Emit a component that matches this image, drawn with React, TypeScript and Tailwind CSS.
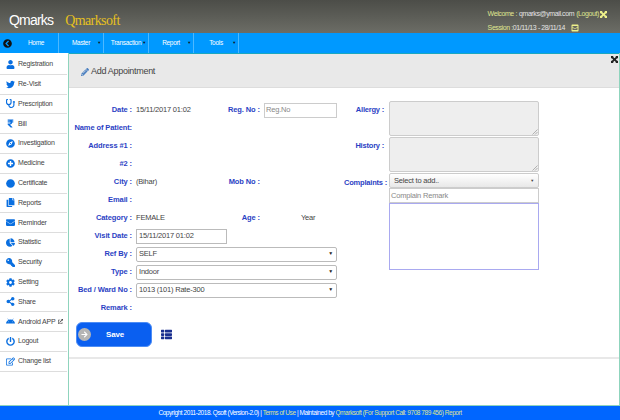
import React from "react";
import {
  FaUser, FaTwitter, FaStethoscope, FaRupeeSign, FaCompass, FaPlusCircle, FaCircle, FaCopy,
  FaEnvelope, FaChartPie, FaKey, FaCog, FaShareAlt, FaAndroid, FaPowerOff, FaRegEdit,
  FaChevronCircleLeft, FaPencilAlt, FaThList, FaArrowRight, FaEnvelopeSquare, FaExternalLinkAlt,
} from "react-icons/fa";

const sideItems = [
  { label: "Registration", icon: FaUser },
  { label: "Re-Visit", icon: FaTwitter },
  { label: "Prescription", icon: FaStethoscope },
  { label: "Bill", icon: FaRupeeSign },
  { label: "Investigation", icon: FaCompass },
  { label: "Medicine", icon: FaPlusCircle },
  { label: "Certificate", icon: FaCircle },
  { label: "Reports", icon: FaCopy },
  { label: "Reminder", icon: FaEnvelope },
  { label: "Statistic", icon: FaChartPie },
  { label: "Security", icon: FaKey },
  { label: "Setting", icon: FaCog },
  { label: "Share", icon: FaShareAlt },
  { label: "Android APP", icon: FaAndroid },
  { label: "Logout", icon: FaPowerOff },
  { label: "Change list", icon: FaRegEdit },
];

const navItems = [
  { label: "Home", caret: false },
  { label: "Master", caret: true },
  { label: "Transaction", caret: true },
  { label: "Report", caret: true },
  { label: "Tools", caret: true },
];

function Arrows({ className }: { className: string }) {
  return (
    <svg viewBox="0 0 12 12" className={className} fill="currentColor">
      <path d="M0 0h4.500L3.400 1.100 6 3.700l2.600-2.600L7.500 0H12v4.500l-1.100-1.100L8.300 6l2.600 2.600 1.100-1.100V12H7.500l1.100-1.100L6 8.300l-2.600 2.600L4.500 12H0V7.500l1.100 1.100L3.700 6 1.100 3.400 0 4.500z" />
    </svg>
  );
}

function Grip() {
  return (
    <svg viewBox="0 0 6 6" className="absolute bottom-0 right-0 h-[6px] w-[6px] text-[#888]" stroke="currentColor" strokeWidth="0.6">
      <path d="M0.500 5.500L5.500 0.500M3 5.500L5.500 3" />
    </svg>
  );
}

function Row({ label, children }: { label: string; children?: React.ReactNode }) {
  return (
    <div className="flex h-[18px] items-center">
      <div className="w-[63px] shrink-0 whitespace-nowrap text-right text-[7.500px] font-bold tracking-[-0.1px] text-[#2b3fc4]">{label}</div>
      <div className="ml-[4px] flex flex-1 items-center text-[#444]">{children}</div>
    </div>
  );
}

function SelectBox({ value }: { value: string }) {
  return (
    <div className="flex h-[15px] w-[201px] items-center justify-between rounded-[2px] border border-[#bbb] bg-white pl-[2px] pr-[3px] text-[#444]">
      <span>{value}</span>
      <span className="text-[5px] text-[#222]">▼</span>
    </div>
  );
}

function MidLabel({ label, children }: { label: string; children?: React.ReactNode }) {
  return (
    <div className="flex items-center">
      <span className="w-[50px] whitespace-nowrap text-right text-[7.500px] font-bold tracking-[-0.1px] text-[#2b3fc4]">{label} :</span>
      {children}
    </div>
  );
}

export default function App() {
  return (
    <div className="flex h-[420px] w-[620px] flex-col overflow-hidden bg-white font-['Liberation_Sans',sans-serif] text-[7.500px] tracking-[-0.2px]">
      <header className="flex h-[33px] items-start justify-between bg-gradient-to-b from-[#4c4d48] to-[#6c6d66] tracking-normal">
        <div className="flex items-baseline pl-[9px] pt-[10px]">
          <span className="text-[14px] leading-[20px] tracking-[-0.8px] text-white">Qmarks</span>
          <span className="ml-[12px] font-['Liberation_Serif',serif] text-[14px] leading-[20px] tracking-[-0.6px] text-[#e6c01e]">Qmarksoft</span>
        </div>
        <div className="pr-[13px] pt-[7px] text-[7px] leading-[14px] tracking-[-0.4px] text-[#dfe58f]">
          <div className="flex items-center">
            Welcome : <span className="ml-[2px] text-[#e4e4e4]">qmarks@ymail.com</span>
            <span className="ml-[2px]">(Logout)</span>
            <Arrows className="ml-[1px] h-[7px] w-[7px] text-[#eef08a]" />
          </div>
          <div className="flex items-center">
            Session :<span className="text-[#e4e4e4]">01/11/13 - 28/11/14</span>
            <FaEnvelopeSquare className="ml-[6px] text-[8px] text-[#eef08a]" />
          </div>
        </div>
      </header>

      <nav className="flex h-[20px] items-stretch bg-[#0099ff] text-white">
        <div className="flex w-[14px] items-center justify-center">
          <FaChevronCircleLeft className="text-[9px] text-[#111]" />
        </div>
        {navItems.map((item) => (
          <div key={item.label} className="relative flex w-[45px] items-center justify-center border-r border-[#4db8ff]">
            <span className="text-[6.500px] tracking-[-0.3px]">{item.label}</span>
            {item.caret && <span className="absolute right-[2px] top-[7px] text-[4px] text-[#111]">▼</span>}
          </div>
        ))}
      </nav>

      <div className="flex min-h-0 flex-1">
        <aside className="w-[69px] shrink-0 border-r border-[#8fd4bd] bg-white pt-[2px]">
          {sideItems.map((item) => (
            <div key={item.label} className="mr-[1px] flex h-[19.800px] items-center border-b border-[#ddd] pl-[6px]">
              <item.icon className={`w-[9px] shrink-0 text-[9px] text-[#0a6fe0] ${item.label === "Security" ? "-scale-x-100" : ""}`} />
              <span className="ml-[3px] flex items-center whitespace-nowrap text-[7px] text-[#444]">
                {item.label}
                {item.label === "Android APP" && <FaExternalLinkAlt className="ml-[2px] text-[5px]" />}
              </span>
            </div>
          ))}
        </aside>

        <main className="min-w-0 flex-1 border-r border-[#8fd4bd]">
          <div className="relative flex h-[35px] items-center border-y border-t-[#1aa7c0] border-b-[#ddd] bg-[#e9e9e9] pl-[12px] pt-[2px] text-[9px] tracking-[-0.3px] text-[#444]">
            <FaPencilAlt className="mr-[2px] text-[8px] text-[#4a7fc0]" />
            Add Appointment
            <Arrows className="absolute right-[1px] top-[2px] h-[7px] w-[7px] text-[#222]" />
          </div>

          <div className="flex border-b-2 border-[#e8e8e8] pb-[10px]">
            <div className="w-[269px] shrink-0 pt-[13px]">
              <Row label="Date :">
                <span className="w-[74px]">15/11/2017 01:02</span>
                <MidLabel label="Reg. No">
                  <div className="ml-[4px] flex h-[15px] w-[73px] items-center border border-[#ccc] pl-[1px] text-[#888]">Reg.No</div>
                </MidLabel>
              </Row>
              <Row label="Name of Patient:" />
              <Row label="Address #1 :" />
              <Row label="#2 :" />
              <Row label="City :">
                <span className="w-[74px]">(Bihar)</span>
                <MidLabel label="Mob No" />
              </Row>
              <Row label="Email :" />
              <Row label="Category :">
                <span className="w-[74px]">FEMALE</span>
                <MidLabel label="Age">
                  <span className="ml-[41px]">Year</span>
                </MidLabel>
              </Row>
              <Row label="Visit Date :">
                <div className="flex h-[15px] w-[91px] items-center border border-[#bbb] pl-[2px]">15/11/2017 01:02</div>
              </Row>
              <Row label="Ref By :"><SelectBox value="SELF" /></Row>
              <Row label="Type :"><SelectBox value="Indoor" /></Row>
              <Row label="Bed / Ward No :"><SelectBox value="1013 (101) Rate-300" /></Row>
              <Row label="Remark :" />

              <div className="ml-[7px] mt-[5px] flex items-center">
                <button className="flex h-[25px] w-[76px] items-center rounded-[6px] border border-[#4d8df5] bg-[#0a5ff0] pl-[1px] text-[8px] font-bold text-white">
                  <span className="flex h-[13px] w-[13px] items-center justify-center rounded-full bg-[#b5b5b5]">
                    <FaArrowRight className="text-[7px] text-white" />
                  </span>
                  <span className="ml-[15px]">Save</span>
                </button>
                <FaThList className="ml-[9px] text-[11px] text-[#1a2f8f]" />
              </div>
            </div>

            <div className="ml-[6px] flex flex-col pt-[13px] text-[#2b3fc4]">
              <div className="flex">
                <div className="w-[40px] whitespace-nowrap pt-[3px] text-right text-[7.500px] font-bold">Allergy :</div>
                <div className="relative ml-[5px] h-[35px] w-[150px] rounded-[2px] border border-[#ccc] bg-[#eee]"><Grip /></div>
              </div>
              <div className="mt-[1px] flex">
                <div className="w-[40px] whitespace-nowrap pt-[3px] text-right text-[7.500px] font-bold">History :</div>
                <div className="relative ml-[5px] h-[35px] w-[150px] rounded-[2px] border border-[#ccc] bg-[#eee]"><Grip /></div>
              </div>
              <div className="mt-[1px] flex">
                <div className="w-[40px] whitespace-nowrap pt-[4px] text-right text-[7.500px] font-bold">Complaints :</div>
                <div className="ml-[5px] w-[150px]">
                  <div className="flex h-[15px] items-center justify-between rounded-[2px] border border-[#ccc] bg-gradient-to-b from-white to-[#e8e8e8] px-[4px] text-[#444]">
                    <span>Select to add..</span>
                    <span className="text-[4px]">▼</span>
                  </div>
                  <div className="flex h-[15px] items-center border border-[#ccc] pl-[1px] text-[#888]">Complain Remark</div>
                  <div className="h-[67px] border border-[#a9a9f0]" />
                </div>
              </div>
            </div>
          </div>
        </main>
      </div>

      <footer className="flex h-[15px] items-center justify-center border-t border-[#8fd4bd] bg-[#0066ff] text-[6.500px] tracking-[-0.45px] text-white">
        <span>
          Copyright 2011-2018. Qsoft (Version-2.0) | <span className="text-[#dfe58f]">Terms of Use</span> | Maintained by{" "}
          <span className="text-[#dfe58f]">Qmarksoft (For Support Call: 9708 789 456) Report</span>
        </span>
      </footer>
    </div>
  );
}
